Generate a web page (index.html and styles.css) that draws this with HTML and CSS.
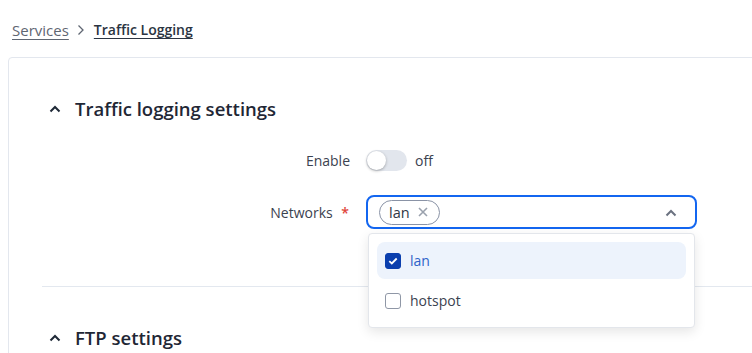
FILE: index.html
```html
<!DOCTYPE html>
<html>
<head>
<meta charset="utf-8">
<link rel="stylesheet" href="styles.css">
</head>
<body>
<nav class="crumbs">
  <a class="crumb" href="#">Services</a>
  <svg class="crumb-sep" width="8" height="12" viewBox="0 0 8 12"><path d="M1.5 1.5 L6 6 L1.5 10.5" fill="none" stroke="#5f6672" stroke-width="1.3"/></svg>
  <a class="crumb crumb-current" href="#">Traffic Logging</a>
</nav>
<main class="card">
  <section class="section">
    <h2 class="section-title">
      <svg class="caret" width="12" height="8" viewBox="0 0 12 8"><path d="M1.5 6.5 L6 2 L10.5 6.5" fill="none" stroke="#1f2937" stroke-width="2"/></svg>
      Traffic logging settings
    </h2>
    <div class="form">
      <div class="row row-enable">
        <label class="label">Enable</label>
        <div class="control">
          <span class="toggle"><span class="knob"></span></span>
          <span class="toggle-text">off</span>
        </div>
      </div>
      <div class="row row-networks">
        <label class="label">Networks <span class="req">*</span></label>
        <div class="control">
          <div class="select">
            <span class="tag">lan <svg class="tag-x" width="10" height="10" viewBox="0 0 10 10"><path d="M1 1 L9 9 M9 1 L1 9" fill="none" stroke="#9aa1ad" stroke-width="1.6"/></svg></span>
            <svg class="select-caret" width="12" height="8" viewBox="0 0 12 8"><path d="M1.5 6.5 L6 2 L10.5 6.5" fill="none" stroke="#6b7280" stroke-width="2"/></svg>
            <ul class="menu">
              <li class="opt opt-on"><span class="cb cb-on"><svg width="10" height="8" viewBox="0 0 10 8"><path d="M1.3 4.2 L3.8 6.5 L8.7 1.5" fill="none" stroke="#fff" stroke-width="1.8"/></svg></span>lan</li>
              <li class="opt"><span class="cb"></span>hotspot</li>
            </ul>
          </div>
        </div>
      </div>
    </div>
  </section>
  <hr class="divider">
  <section class="section">
    <h2 class="section-title">
      <svg class="caret" width="12" height="8" viewBox="0 0 12 8"><path d="M1.5 6.5 L6 2 L10.5 6.5" fill="none" stroke="#1f2937" stroke-width="2"/></svg>
      FTP settings
    </h2>
  </section>
</main>
</body>
</html>
```
FILE: styles.css
```css
html, body {
  margin: 0;
  padding: 0;
  overflow: hidden;
  background: #fff;
  font-family: "Open Sans", "Noto Sans", sans-serif;
  color: #374151;
}
.crumbs {
  display: flex;
  align-items: center;
  height: 57px;
  padding-left: 12px;
  font-size: 15px;
  padding-top: 2px;
  box-sizing: border-box;
}
.crumb {
  color: #5f6672;
  text-decoration: underline;
  text-underline-offset: 3px;
  text-decoration-thickness: 1px;
}
.crumb-current {
  color: #2b3442;
  font-weight: 600;
  font-size: 14px;
}
.crumb-sep { margin: 1px 9px 0 8px; }
.card {
  margin-left: 8px;
  width: 800px;
  height: 310px;
  border: 1px solid #e3e7ee;
  border-radius: 4px;
  padding-left: 33px;
  box-sizing: border-box;
}
.section-title {
  display: flex;
  align-items: center;
  gap: 14px;
  margin: 0;
  font-size: 18.5px;
  font-weight: 600;
  color: #1f2735;
  padding-left: 7px;
}
.section:first-child .section-title { padding-top: 38px; }
.form {
  padding-top: 29px;
  display: flex;
  flex-direction: column;
  gap: 24px;
}
.row {
  display: grid;
  grid-template-columns: 308px 1fr;
  column-gap: 16px;
  align-items: center;
}
.label {
  text-align: right;
  font-size: 14px;
  color: #3b4250;
}
.req { color: #e0453a; margin-left: 5px; font-weight: 600; }
.row-networks .label { padding-right: 1px; }
.control { display: flex; align-items: center; }
.toggle {
  position: relative;
  width: 41px;
  height: 21px;
  border-radius: 11px;
  background: #e2e6ed;
}
.knob {
  position: absolute;
  left: 1px;
  top: 1px;
  width: 19px;
  height: 19px;
  border-radius: 50%;
  background: #fff;
  box-shadow: 0 1px 3px rgba(0,0,0,0.3);
}
.toggle-text { margin-left: 8px; font-size: 14px; color: #3b4250; }
.select {
  position: relative;
  width: 331px;
  height: 34px;
  box-sizing: border-box;
  border: 2px solid #1366f0;
  border-radius: 8px;
  display: flex;
  align-items: center;
  padding-left: 11px;
}
.tag {
  display: inline-flex;
  align-items: center;
  height: 25px;
  box-sizing: border-box;
  border: 1.5px solid #8a93a6;
  border-radius: 13px;
  padding: 0 11px 0 9px;
  font-size: 14.5px;
  color: #2f3745;
}
.tag-x { margin-left: 8px; }
.select-caret { position: absolute; right: 18px; top: 12px; }
.menu {
  position: absolute;
  top: 36px;
  left: 0;
  width: 327px;
  margin: 0;
  padding: 8px 8px 8px 8px;
  list-style: none;
  box-sizing: border-box;
  background: #fff;
  border: 1px solid #e3e6eb;
  border-radius: 4px;
  box-shadow: 0 4px 12px rgba(0,0,0,0.1);
  z-index: 2;
}
.opt {
  display: flex;
  align-items: center;
  height: 37px;
  padding-left: 8px;
  font-size: 14px;
  color: #3b4250;
  border-radius: 8px;
}
.opt + .opt { margin-top: 3px; }
.opt-on { background: #edf3fc; color: #2e63c9; }
.cb {
  width: 16px;
  height: 16px;
  box-sizing: border-box;
  border: 1.5px solid #8f97a6;
  border-radius: 3px;
  margin-right: 9px;
  display: inline-flex;
  align-items: center;
  justify-content: center;
}
.cb-on { background: #0b3fae; border-color: #0b3fae; }
.divider {
  margin: 57px 0 0 0;
  border: 0;
  border-top: 1px solid #e3e8ef;
}
.section + .divider + .section .section-title { padding-top: 38px; }
```
